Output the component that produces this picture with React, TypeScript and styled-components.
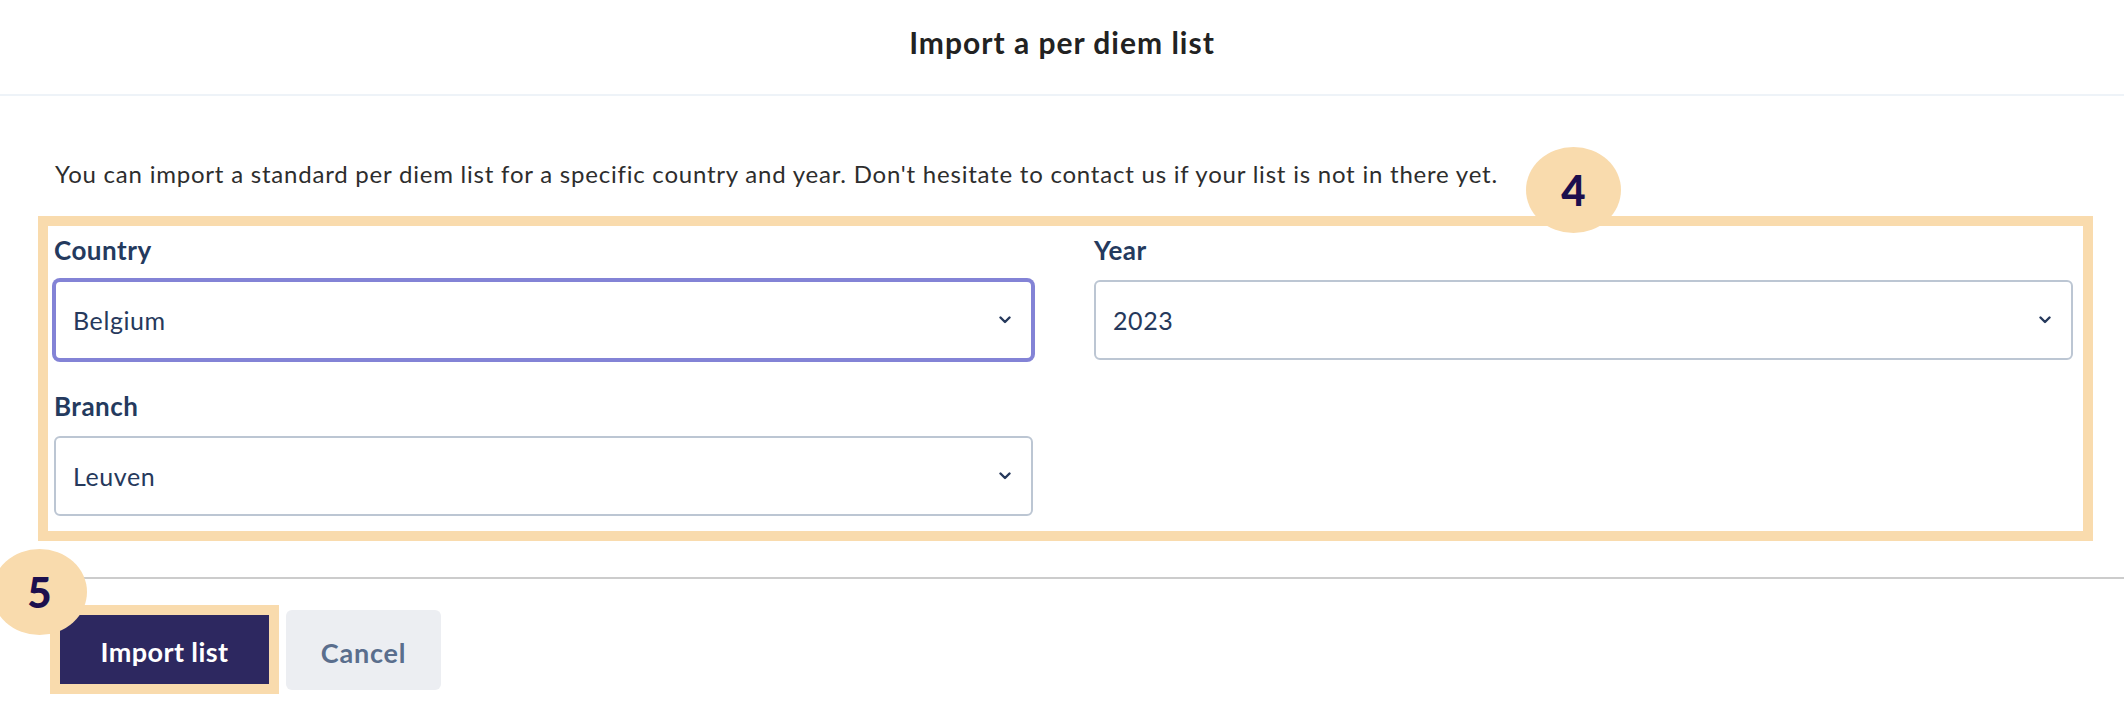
import React from "react"
import styled, { createGlobalStyle } from "styled-components"

const GlobalStyle = createGlobalStyle`
  html, body {
    margin: 0;
    padding: 0;
    background: #ffffff;
    font-family: Lato, "Open Sans", sans-serif;
  }
`

type Field = {
  label: string
  value: string
  focused?: boolean
}

const fields: Field[] = [
  { label: "Country", value: "Belgium", focused: true },
  { label: "Year", value: "2023" },
  { label: "Branch", value: "Leuven" },
]

const Chevron = () => (
  <svg width="12" height="8" viewBox="0 0 12 8" aria-hidden="true">
    <polyline
      points="1.5,1.5 6,6 10.5,1.5"
      fill="none"
      stroke="#26395c"
      strokeWidth="2.4"
      strokeLinecap="round"
      strokeLinejoin="round"
    />
  </svg>
)

export default function App() {
  return (
    <>
      <GlobalStyle />
      <Page>
        <Header>
          <Title>Import a per diem list</Title>
        </Header>
        <Body>
          <Intro>
            You can import a standard per diem list for a specific country and
            year. Don't hesitate to contact us if your list is not in there yet.
          </Intro>
          <Highlight>
            <StepBadge $top={-79} $left={1478}>
              4
            </StepBadge>
            <FormGrid>
              {fields.map((field) => (
                <FieldGroup key={field.label}>
                  <Label>{field.label}</Label>
                  <Select $focused={field.focused}>
                    <SelectValue>{field.value}</SelectValue>
                    <Chevron />
                  </Select>
                </FieldGroup>
              ))}
            </FormGrid>
          </Highlight>
        </Body>
        <Divider />
        <Footer>
          <StepBadge $top={-30} $left={-8}>
            5
          </StepBadge>
          <ButtonHighlight>
            <PrimaryButton>Import list</PrimaryButton>
          </ButtonHighlight>
          <SecondaryButton>Cancel</SecondaryButton>
        </Footer>
      </Page>
    </>
  )
}

const Page = styled.div`
  width: 2124px;
  height: 716px;
  overflow: hidden;
  background: #ffffff;
`

const Header = styled.header`
  box-sizing: border-box;
  height: 96px;
  padding-bottom: 10px;
  display: flex;
  align-items: center;
  justify-content: center;
  border-bottom: 2px solid #eef3f8;
`

const Title = styled.h1`
  margin: 0;
  font-size: 30px;
  font-weight: 700;
  color: #222222;
  letter-spacing: 1px;
`

const Body = styled.section`
  padding: 60px 31px 0 38px;
`

const Intro = styled.p`
  margin: 0 0 24px 17px;
  font-size: 24px;
  line-height: 36px;
  letter-spacing: 0.78px;
  color: #2d2d2d;
`

const Highlight = styled.div`
  position: relative;
  border: 10px solid #f9dbad;
  padding: 8px 10px 15px 6px;
`

const StepBadge = styled.div<{ $top: number; $left: number }>`
  position: absolute;
  top: ${(p) => p.$top}px;
  left: ${(p) => p.$left}px;
  width: 95px;
  height: 86px;
  border-radius: 50%;
  background: #f9dbad;
  color: #1c0f4e;
  font-size: 42px;
  font-weight: 900;
  display: flex;
  align-items: center;
  justify-content: center;
  z-index: 2;
`

const FormGrid = styled.div`
  display: grid;
  grid-template-columns: 979px 979px;
  column-gap: 61px;
  row-gap: 30px;
`

const FieldGroup = styled.div`
  display: flex;
  flex-direction: column;
  gap: 14px;
`

const Label = styled.label`
  font-size: 26px;
  line-height: 32px;
  font-weight: 700;
  letter-spacing: 0.5px;
  color: #243a5e;
`

const Select = styled.div<{ $focused?: boolean }>`
  box-sizing: border-box;
  height: 80px;
  display: flex;
  align-items: center;
  justify-content: space-between;
  padding: 0 20px 0 17px;
  border-radius: 6px;
  border: 2px solid ${(p) => (p.$focused ? "#8383d6" : "#bcc6d3")};
  box-shadow: ${(p) => (p.$focused ? "0 0 0 2px #8383d6" : "none")};
  background: #ffffff;
`

const SelectValue = styled.span`
  font-size: 25px;
  letter-spacing: 0.6px;
  color: #26395c;
`

const Divider = styled.hr`
  margin: 36px 0 0;
  border: none;
  height: 2px;
  background: #cccccc;
`

const Footer = styled.footer`
  position: relative;
  display: flex;
  align-items: center;
  gap: 7px;
  padding: 26px 0 0 50px;
`

const ButtonHighlight = styled.div`
  border: 10px solid #f9dbad;
`

const PrimaryButton = styled.button`
  display: block;
  width: 209px;
  height: 69px;
  border: none;
  background: #2d2860;
  color: #ffffff;
  font-family: inherit;
  font-size: 27px;
  font-weight: 700;
  letter-spacing: 0.4px;
  padding: 4px 0 0;
  cursor: pointer;
`

const SecondaryButton = styled.button`
  width: 155px;
  height: 80px;
  border: none;
  border-radius: 6px;
  background: #eceef2;
  color: #5a6e8d;
  font-family: inherit;
  font-size: 27px;
  font-weight: 700;
  letter-spacing: 0.8px;
  padding: 5px 0 0;
  cursor: pointer;
`
